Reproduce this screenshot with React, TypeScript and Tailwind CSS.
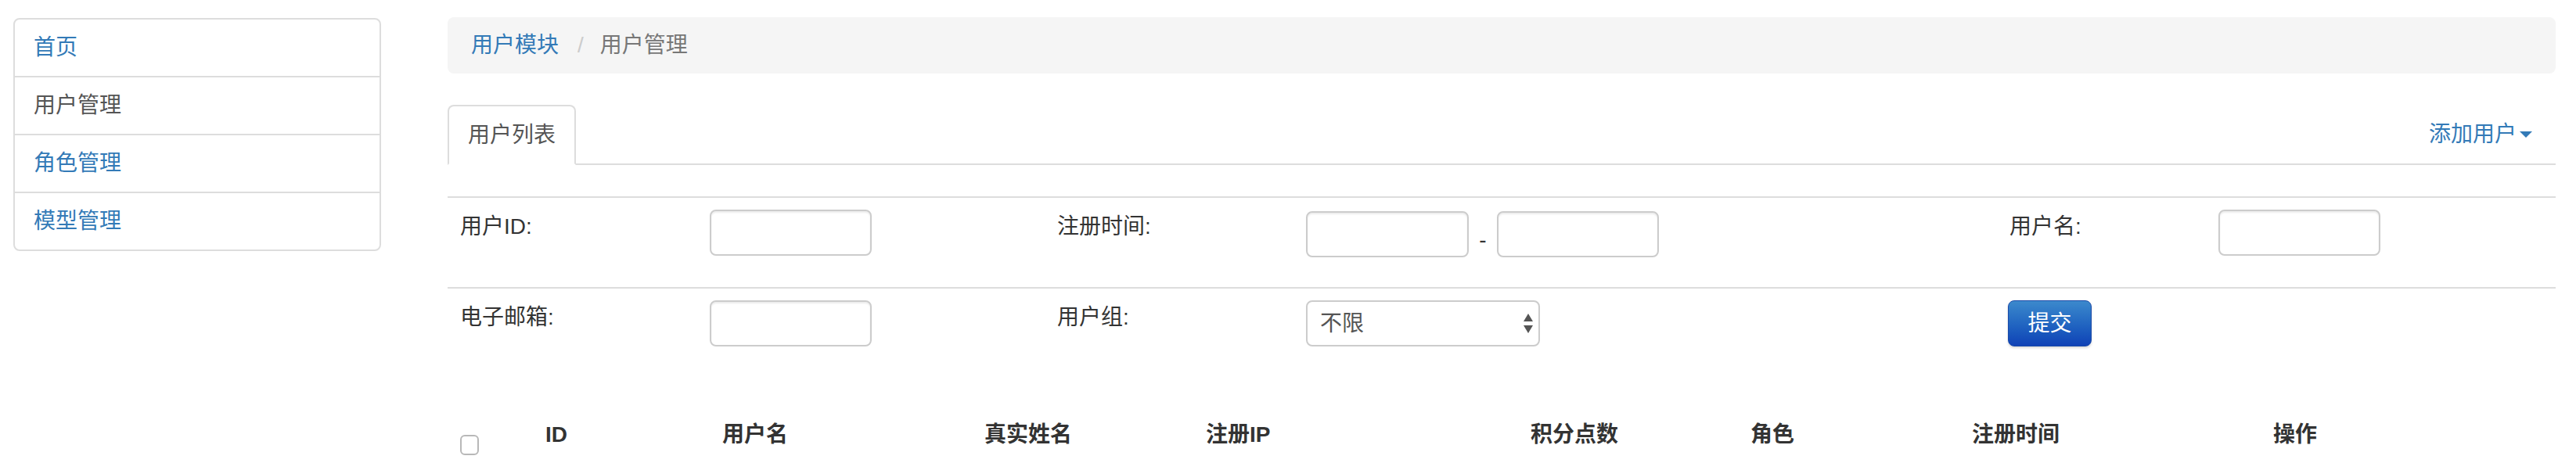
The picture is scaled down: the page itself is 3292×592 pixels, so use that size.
const menu = [
  { label: "首页", active: false },
  { label: "用户管理", active: true },
  { label: "角色管理", active: false },
  { label: "模型管理", active: false },
];

const columns = [
  { label: "ID", w: "w-[226px]" },
  { label: "用户名", w: "w-[335px]" },
  { label: "真实姓名", w: "w-[283px]" },
  { label: "注册IP", w: "w-[415px]" },
  { label: "积分点数", w: "w-[281px]" },
  { label: "角色", w: "w-[283px]" },
  { label: "注册时间", w: "w-[385px]" },
  { label: "操作", w: "w-[377px]" },
];

function TextBox({ className = "" }: { className?: string }) {
  return (
    <input
      type="text"
      className={`h-[59px] w-[207px] rounded-[8px] border-2 border-[#ccc] bg-white shadow-[inset_0_2px_2px_rgba(0,0,0,0.075)] outline-none ${className}`}
    />
  );
}

function SelectBox() {
  return (
    <div className="flex h-[59px] w-[299px] items-center justify-between rounded-[8px] border-2 border-[#ccc] bg-white pl-[16px] pr-[7px] text-[#555]">
      <span>不限</span>
      <svg width="12" height="26" viewBox="0 0 12 26" className="fill-[#555]">
        <path d="M6 0 L12 10 L0 10 Z" />
        <path d="M0 15 L12 15 L6 25 Z" />
      </svg>
    </div>
  );
}

export default function App() {
  return (
    <div className="flex h-[592px] w-[3292px] items-start overflow-hidden bg-white font-['Liberation_Sans','Noto_Sans_CJK_SC',sans-serif] text-[28px] leading-[40px] text-[#333]">
      {/* side menu */}
      <nav className="ml-[17px] mt-[23px] w-[470px] overflow-hidden rounded-[8px] border-2 border-[#ddd]">
        {menu.map((item, i) => (
          <a
            key={item.label}
            href="#"
            className={`flex items-center px-[24px] ${i ? "h-[74px] border-t-2 border-[#ddd]" : "h-[72px]"} ${item.active ? "text-[#555]" : "text-[#337ab7]"}`}
          >
            {item.label}
          </a>
        ))}
      </nav>

      <main className="ml-[85px] mt-[22px] w-[2694px]">
        {/* breadcrumb */}
        <div className="flex h-[72px] items-center rounded-[8px] bg-[#f5f5f5] px-[30px]">
          <a href="#" className="text-[#337ab7]">用户模块</a>
          <span className="ml-[24px] mr-[21px] text-[#ccc]">/</span>
          <span className="text-[#777]">用户管理</span>
        </div>

        {/* tabs */}
        <div className="mt-[40px] flex h-[77px] justify-between border-b-2 border-[#ddd]">
          <div className="-mb-[2px] flex h-[77px] items-center rounded-t-[8px] border-2 border-[#ddd] border-b-transparent bg-white px-[24px] text-[#555]">
            用户列表
          </div>
          <a href="#" className="flex items-center pr-[30px] text-[#337ab7]">
            添加用户
            <span className="ml-[4px] h-0 w-0 border-x-[8px] border-t-[8px] border-x-transparent border-t-[#337ab7]" />
          </a>
        </div>

        {/* search form */}
        <div className="mt-[40px]">
          <div className="grid h-[116px] grid-cols-[319px_444px_318px_899px_267px_447px] border-t-2 border-[#ddd]">
            <div className="pl-[16px] pt-[17px]">用户ID:</div>
            <div className="pl-[16px] pt-[15px]">
              <TextBox />
            </div>
            <div className="pl-[16px] pt-[17px]">注册时间:</div>
            <div className="flex items-start pl-[16px] pt-[17px]">
              <TextBox className="w-[208px]" />
              <span className="mt-[17px] w-[36px] text-center">-</span>
              <TextBox />
            </div>
            <div className="pl-[16px] pt-[17px]">用户名:</div>
            <div className="pl-[16px] pt-[15px]">
              <TextBox />
            </div>
          </div>
          <div className="grid h-[116px] grid-cols-[319px_444px_318px_899px_267px_447px] border-t-2 border-[#ddd]">
            <div className="pl-[16px] pt-[17px]">电子邮箱:</div>
            <div className="pl-[16px] pt-[15px]">
              <TextBox />
            </div>
            <div className="pl-[16px] pt-[17px]">用户组:</div>
            <div className="pl-[16px] pt-[15px]">
              <SelectBox />
            </div>
            <div className="pl-[14px] pt-[15px]">
              <button className="h-[59px] w-[107px] rounded-[8px] border border-[#1a4aa8] bg-linear-to-b from-[#3c89cc] to-[#1141b6] text-white shadow-[0_2px_3px_rgba(0,0,0,0.15)]">
                提交
              </button>
            </div>
            <div />
          </div>
        </div>

        {/* user table header */}
        <div className="mt-[37px] flex font-bold">
          <div className="w-[109px] pl-[16px] pt-[36px]">
            <div className="h-[26px] w-[24px] rounded-[6px] border-2 border-[#b8b8b8] bg-white" />
          </div>
          {columns.map((c) => (
            <div key={c.label} className={`${c.w} pl-[16px] pt-[16px]`}>
              {c.label}
            </div>
          ))}
        </div>
      </main>
    </div>
  );
}
